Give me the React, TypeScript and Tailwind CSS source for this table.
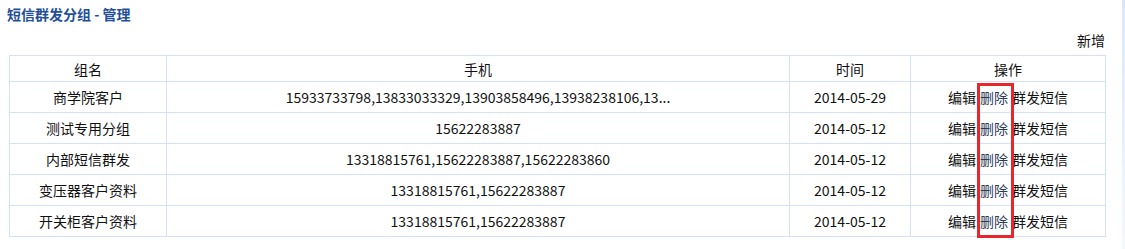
import React from "react";

const rows = [
  { name: "商学院客户", phone: "15933733798,13833033329,13903858496,13938238106,13...", time: "2014-05-29" },
  { name: "测试专用分组", phone: "15622283887", time: "2014-05-12" },
  { name: "内部短信群发", phone: "13318815761,15622283887,15622283860", time: "2014-05-12" },
  { name: "变压器客户资料", phone: "13318815761,15622283887", time: "2014-05-12" },
  { name: "开关柜客户资料", phone: "13318815761,15622283887", time: "2014-05-12" },
];

export default function App() {
  const font = { fontFamily: '"Noto Sans CJK SC", "Noto Sans", sans-serif' };
  return (
    <div className="flex w-[1125px] h-[249px] bg-white text-[14px] text-[#111]" style={font}>
      <div className="relative w-[1122px]">
        <div className="pl-[7px] pt-[4px] h-[26px] text-[14px] font-bold text-[#1f4f9b] leading-[20px]">
          短信群发分组 - 管理
        </div>
        <div className="w-[1105px] text-right h-[29px] leading-[22px] pt-[3px]">新增</div>
        <table className="ml-[9px] w-[1096px] table-fixed border-collapse">
          <colgroup>
            <col className="w-[157px]" />
            <col className="w-[623px]" />
            <col className="w-[121px]" />
            <col className="w-[195px]" />
          </colgroup>
          <thead>
            <tr className="h-[26px]">
              {["组名", "手机", "时间", "操作"].map((h) => (
                <th key={h} className="border border-[#d3e2f6] font-normal text-center p-0 leading-[24px]">
                  {h}
                </th>
              ))}
            </tr>
          </thead>
          <tbody>
            {rows.map((r) => (
              <tr key={r.name} className="h-[31px]">
                <td className="border border-[#d3e2f6] text-center p-0">{r.name}</td>
                <td className="border border-[#d3e2f6] text-center p-0">{r.phone}</td>
                <td className="border border-[#d3e2f6] text-center p-0">{r.time}</td>
                <td className="border border-[#d3e2f6] text-center p-0 whitespace-nowrap">
                  <span>编辑</span><span className="inline-block w-[4px]" /><span className="text-[#2d3a5a]">删除</span><span className="inline-block w-[4px]" /><span>群发短信</span>
                </td>
              </tr>
            ))}
          </tbody>
        </table>
        <div className="absolute left-[977px] top-[83px] w-[37px] h-[155px] border-[3px] border-[#e8262b]" />
      </div>
      <div className="w-[3px] bg-gradient-to-b from-[#d8e8fa] to-[#f3f8fe]" />
    </div>
  );
}
